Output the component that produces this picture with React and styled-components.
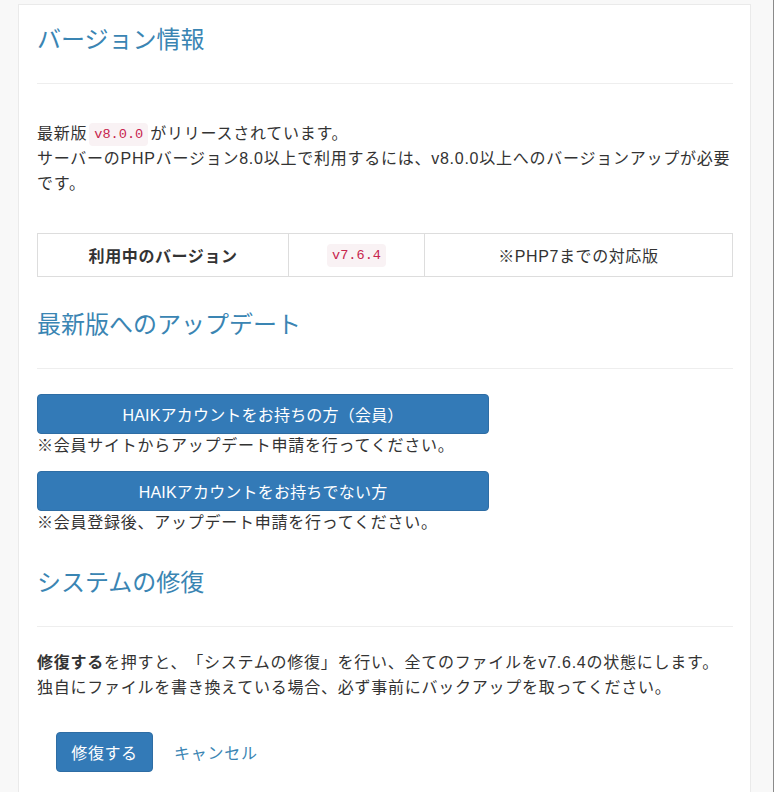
import React from 'react';
import styled, { createGlobalStyle } from 'styled-components';

const GlobalStyle = createGlobalStyle`
  html, body {
    margin: 0;
    padding: 0;
    background: #fff;
    overflow: hidden;
  }
  body {
    font-family: 'Liberation Sans', 'Noto Sans CJK JP', sans-serif;
    font-size: 16px;
    color: #333;
    text-spacing-trim: space-all;
  }
`;

const Backdrop = styled.div`
  width: 774px;
  height: 792px;
  background: #f8f8f8;
  border-right: 1px solid #8a8a8a;
  box-sizing: border-box;
  padding: 4px 22px 0 18px;
`;

const Panel = styled.div`
  background: #fff;
  border: 1px solid #eaeaea;
  border-bottom: none;
  height: 100%;
  box-sizing: border-box;
  padding: 0 17px 0 18px;
`;

const Section = styled.section`
  display: flex;
  flex-direction: column;
  letter-spacing: 0.75px;
`;

const Title = styled.h2`
  margin: ${(p) => p.$top || 35}px 0 0;
  font-size: 24px;
  line-height: 26px;
  font-weight: 400;
  letter-spacing: 0;
  color: #3a85b3;
`;

const Rule = styled.hr`
  margin: 30px 0 0;
  border: none;
  border-top: 1px solid #eee;
  height: 0;
`;

const Para = styled.p`
  margin: ${(p) => p.$top || 0}px 0 0;
  line-height: 25px;
`;

const Code = styled.code`
  font-family: 'Liberation Mono', monospace;
  font-size: 13.6px;
  line-height: 17px;
  letter-spacing: 0;
  display: inline-block;
  padding: 3px 5px;
  margin: 0 2px;
  color: #c7254e;
  background: #f9f2f4;
  border-radius: 4px;
  vertical-align: 1px;
`;

const Table = styled.table`
  margin-top: 37px;
  width: 100%;
  border-collapse: collapse;
`;

const Cell = styled.td`
  width: ${(p) => p.$w}px;
  height: 42px;
  padding: 0;
  border: 1px solid #ddd;
  text-align: center;
  letter-spacing: 0.6px;
  font-weight: ${(p) => (p.$bold ? 700 : 400)};
`;

const WideButton = styled.button`
  width: 452px;
  height: 40px;
  margin-top: ${(p) => p.$top}px;
  padding: 0;
  background: #337ab7;
  border: 1px solid #2e6da4;
  border-radius: 4px;
  color: #fff;
  font: inherit;
  font-size: 16px;
  letter-spacing: 0.2px;
  cursor: pointer;
`;

const Note = styled.div`
  line-height: 24px;
`;

const Actions = styled.div`
  display: flex;
  align-items: center;
  gap: 21px;
  margin: 32px 0 0 19px;
`;

const SmallButton = styled.button`
  width: 97px;
  height: 40px;
  padding: 0;
  background: #337ab7;
  border: 1px solid #2e6da4;
  border-radius: 4px;
  color: #fff;
  font: inherit;
  font-size: 16px;
  letter-spacing: 0.6px;
  cursor: pointer;
`;

const CancelLink = styled.a`
  color: #3a85b3;
  text-decoration: none;
  font-size: 16px;
  cursor: pointer;
`;

export default function App() {
  return (
    <>
      <GlobalStyle />
      <Backdrop>
        <Panel>
          <Section>
            <Title $top={22}>バージョン情報</Title>
            <Rule />
            <Para $top={37}>
              最新版<Code>v8.0.0</Code>がリリースされています。
              <br />
              サーバーのPHPバージョン8.0以上で利用するには、v8.0.0以上へのバージョンアップが必要です。
            </Para>
            <Table>
              <tbody>
                <tr>
                  <Cell $w={252} $bold>利用中のバージョン</Cell>
                  <Cell $w={135}>
                    <Code>v7.6.4</Code>
                  </Cell>
                  <Cell $w={309}>※PHP7までの対応版</Cell>
                </tr>
              </tbody>
            </Table>
          </Section>

          <Section>
            <Title>最新版へのアップデート</Title>
            <Rule />
            <WideButton $top={25}>HAIKアカウントをお持ちの方（会員）</WideButton>
            <Note>※会員サイトからアップデート申請を行ってください。</Note>
            <WideButton $top={13}>HAIKアカウントをお持ちでない方</WideButton>
            <Note>※会員登録後、アップデート申請を行ってください。</Note>
          </Section>

          <Section>
            <Title>システムの修復</Title>
            <Rule />
            <Para $top={23}>
              <strong>修復する</strong>を押すと、「システムの修復」を行い、全てのファイルをv7.6.4の状態にします。
              <br />
              独自にファイルを書き換えている場合、必ず事前にバックアップを取ってください。
            </Para>
            <Actions>
              <SmallButton>修復する</SmallButton>
              <CancelLink>キャンセル</CancelLink>
            </Actions>
          </Section>
        </Panel>
      </Backdrop>
    </>
  );
}
